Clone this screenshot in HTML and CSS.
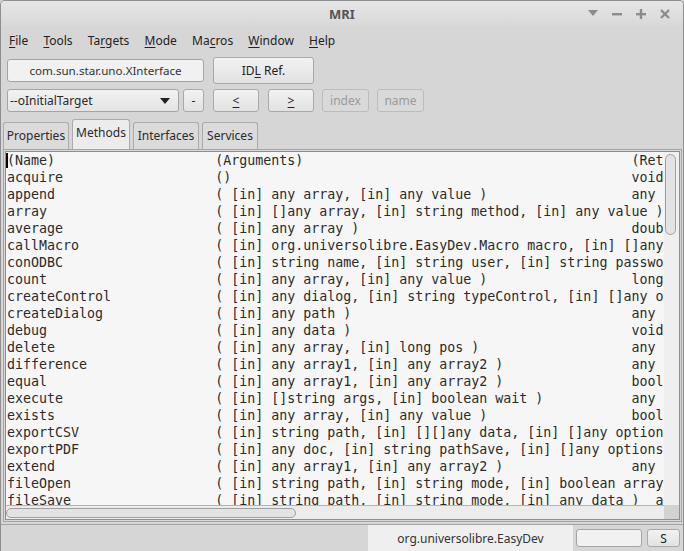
FILE: index.html
```html
<!DOCTYPE html>
<html>
<head>
<meta charset="utf-8">
<link rel="stylesheet" href="styles.css">
</head>
<body>
<div class="window">
  <div class="titlebar">
    <div></div>
    <div class="title">MRI</div>
    <div class="controls">
      <svg width="10" height="7" viewBox="0 0 10 7"><path d="M0 0H10L5 6Z" fill="#8c8c8c"/></svg>
      <svg width="10" height="10" viewBox="0 0 10 10"><rect x="0" y="4" width="10" height="2.4" fill="#8c8c8c"/></svg>
      <svg width="10" height="10" viewBox="0 0 10 10"><rect x="0" y="4" width="10" height="2.4" fill="#8c8c8c"/><rect x="3.8" y="0" width="2.4" height="10" fill="#8c8c8c"/></svg>
      <svg width="10" height="10" viewBox="0 0 10 10"><path d="M1 1L9 9M9 1L1 9" stroke="#8c8c8c" stroke-width="2.4"/></svg>
    </div>
  </div>
  <div class="menubar">
    <span class="menu"><u>F</u>ile</span>
    <span class="menu"><u>T</u>ools</span>
    <span class="menu">Ta<u>r</u>gets</span>
    <span class="menu"><u>M</u>ode</span>
    <span class="menu">Ma<u>c</u>ros</span>
    <span class="menu"><u>W</u>indow</span>
    <span class="menu"><u>H</u>elp</span>
  </div>
  <div class="row1">
    <div class="field ifield">com.sun.star.uno.XInterface</div>
    <div class="btn idl"><span>ID<u>L</u> Ref.</span></div>
  </div>
  <div class="row2">
    <div class="combo"><span>--oInitialTarget</span><svg width="10" height="6" viewBox="0 0 10 6"><path d="M0 0H10L5 6Z" fill="#222"/></svg></div>
    <div class="btn small minus">-</div>
    <div class="btn small nav"><u>&lt;</u></div>
    <div class="btn small nav"><u>&gt;</u></div>
    <div class="btn small dis">index</div>
    <div class="btn small dis">name</div>
  </div>
  <div class="tabs">
    <div class="tab w1">Properties</div>
    <div class="tab sel">Methods</div>
    <div class="tab w1">Interfaces</div>
    <div class="tab w2">Services</div>
  </div>
  <div class="panel">
    <div class="inner">
      <div class="text">
        <span class="caret"></span>
        <div class="r"><span class="n">(Name)</span><span class="a">(Arguments)</span><span class="t">(Return Type)</span></div>
        <div class="r"><span class="n">acquire</span><span class="a">()</span><span class="t">void</span></div>
        <div class="r"><span class="n">append</span><span class="a">( [in] any array, [in] any value )</span><span class="t">any</span></div>
        <div class="r"><span class="n">array</span><span class="a">( [in] []any array, [in] string method, [in] any value )</span><span class="t">any</span></div>
        <div class="r"><span class="n">average</span><span class="a">( [in] any array )</span><span class="t">double</span></div>
        <div class="r"><span class="n">callMacro</span><span class="a">( [in] org.universolibre.EasyDev.Macro macro, [in] []any args )</span><span class="t">any</span></div>
        <div class="r"><span class="n">conODBC</span><span class="a">( [in] string name, [in] string user, [in] string password )</span><span class="t">any</span></div>
        <div class="r"><span class="n">count</span><span class="a">( [in] any array, [in] any value )</span><span class="t">long</span></div>
        <div class="r"><span class="n">createControl</span><span class="a">( [in] any dialog, [in] string typeControl, [in] []any options )</span><span class="t">any</span></div>
        <div class="r"><span class="n">createDialog</span><span class="a">( [in] any path )</span><span class="t">any</span></div>
        <div class="r"><span class="n">debug</span><span class="a">( [in] any data )</span><span class="t">void</span></div>
        <div class="r"><span class="n">delete</span><span class="a">( [in] any array, [in] long pos )</span><span class="t">any</span></div>
        <div class="r"><span class="n">difference</span><span class="a">( [in] any array1, [in] any array2 )</span><span class="t">any</span></div>
        <div class="r"><span class="n">equal</span><span class="a">( [in] any array1, [in] any array2 )</span><span class="t">boolean</span></div>
        <div class="r"><span class="n">execute</span><span class="a">( [in] []string args, [in] boolean wait )</span><span class="t">any</span></div>
        <div class="r"><span class="n">exists</span><span class="a">( [in] any array, [in] any value )</span><span class="t">boolean</span></div>
        <div class="r"><span class="n">exportCSV</span><span class="a">( [in] string path, [in] [][]any data, [in] []any options )</span><span class="t">boolean</span></div>
        <div class="r"><span class="n">exportPDF</span><span class="a">( [in] any doc, [in] string pathSave, [in] []any options )</span><span class="t">any</span></div>
        <div class="r"><span class="n">extend</span><span class="a">( [in] any array1, [in] any array2 )</span><span class="t">any</span></div>
        <div class="r"><span class="n">fileOpen</span><span class="a">( [in] string path, [in] string mode, [in] boolean array )</span><span class="t">any</span></div>
        <div class="r"><span class="n">fileSave</span><span class="a">( [in] string path, [in] string mode, [in] any data )</span><span class="t">any</span></div>
        <div class="r"><span class="n">fileUpdate</span><span class="a">( [in] string path )</span><span class="t">any</span></div>
      </div>
      <div class="vscroll"><div class="vthumb"></div></div>
      <div class="hscroll"><div class="hthumb"></div></div>
      <div class="corner"></div>
    </div>
  </div>
  <div class="status">
    <div class="slabel">org.universolibre.EasyDev</div>
    <div class="field sfield"></div>
    <div class="btn sbtn">S</div>
  </div>
</div>
</body>
</html>
```

FILE: styles.css
```css
html, body {
  margin: 0;
  padding: 0;
  background: #d6d6d6;
}
.window {
  width: 684px;
  height: 551px;
  box-sizing: border-box;
  border: 1px solid #8e8e8e;
  border-bottom: none;
  border-radius: 5px 5px 0 0;
  background: #d6d6d6;
  display: flex;
  flex-direction: column;
  overflow: hidden;
  font-family: "Noto Sans", "Open Sans", sans-serif;
  font-size: 12px;
  color: #2a2a2a;
}
.titlebar {
  height: 25px;
  flex-shrink: 0;
  display: grid;
  grid-template-columns: 1fr auto 1fr;
  align-items: center;
  background: linear-gradient(#e6e6e6, #d8d8d8);
}
.title {
  font-weight: bold;
  font-size: 13px;
  color: #555;
}
.controls {
  display: flex;
  justify-content: flex-end;
  align-items: center;
  gap: 14px;
  padding-right: 13px;
}
.controls svg { display: block; }
.menubar {
  height: 28px;
  flex-shrink: 0;
  display: flex;
  align-items: center;
  padding-left: 0;
  font-size: 12px;
  color: #222;
}
.menu {
  padding: 0 7.6px;
}
.menu:first-child { padding-left: 8px; }
.menu u { text-decoration-thickness: 1px; text-underline-offset: 2px; }
.row1 {
  display: flex;
  align-items: center;
  height: 27px;
  margin-top: 3px;
  padding-left: 6px;
  gap: 9px;
  flex-shrink: 0;
}
.field {
  box-sizing: border-box;
  border: 1px solid #a4a4a4;
  border-radius: 3px;
  background: #f1f1f1;
  display: flex;
  align-items: center;
  justify-content: center;
}
.ifield {
  width: 197px;
  height: 23px;
  color: #333;
  font-size: 11.6px;
}
.btn {
  box-sizing: border-box;
  border: 1px solid #a9a9a9;
  border-radius: 3px;
  background: linear-gradient(#f2f2f2, #e2e2e2);
  display: flex;
  align-items: center;
  justify-content: center;
  color: #222;
}
.btn u { text-decoration-thickness: 1px; text-underline-offset: 2px; }
.idl {
  width: 101px;
  height: 27px;
}
.row2 {
  display: flex;
  align-items: center;
  height: 23px;
  margin-top: 5px;
  padding-left: 6px;
  flex-shrink: 0;
}
.combo {
  box-sizing: border-box;
  width: 172px;
  height: 23px;
  border: 1px solid #a4a4a4;
  border-radius: 3px;
  background: linear-gradient(#f2f2f2, #e4e4e4);
  display: flex;
  align-items: center;
  justify-content: space-between;
  padding: 0 8px 0 2px;
}
.combo svg { display: block; }
.small { height: 23px; }
.minus { width: 21px; margin-left: 4px; }
.nav { width: 46px; margin-left: 9px; }
.nav + .nav { margin-left: 9px; }
.dis {
  width: 47px;
  margin-left: 8px;
  background: #d9d9d9;
  border-color: #bcbcbc;
  color: #9a9a9a;
}
.tabs {
  display: flex;
  align-items: flex-end;
  gap: 3px;
  height: 30px;
  margin-top: 7px;
  padding-left: 2px;
  flex-shrink: 0;
}
.tab {
  box-sizing: border-box;
  height: 27px;
  border: 1px solid #ababab;
  border-bottom: none;
  border-radius: 3px 3px 0 0;
  background: #dbdbdb;
  display: flex;
  align-items: center;
  justify-content: center;
  color: #2a2a2a;
  padding-bottom: 2px;
}
.w1 { width: 66px; }
.w2 { width: 56px; }
.tab.sel {
  width: 58px;
  height: 30px;
  background: #ececec;
  padding-bottom: 4px;
}
.panel {
  box-sizing: border-box;
  height: 373px;
  margin: 0 1px 0 2px;
  border: 1px solid #a6a6a6;
  padding: 1px;
  flex-shrink: 0;
}
.inner {
  box-sizing: border-box;
  height: 100%;
  border: 1px solid #8f8f8f;
  background: #f6f6f6;
  display: grid;
  grid-template-columns: 1fr 15px;
  grid-template-rows: 1fr 14px;
}
.text {
  position: relative;
  overflow: hidden;
  padding-left: 1px;
  font-family: "DejaVu Sans Mono", "Liberation Mono", monospace;
  font-size: 13.3px;
  line-height: 17px;
  color: #2b2b2b;
}
.caret {
  position: absolute;
  left: 0;
  top: 1px;
  width: 2px;
  height: 15px;
  background: #000;
}
.r {
  display: flex;
  white-space: pre;
  width: max-content;
}
.n { width: 26ch; flex-shrink: 0; }
.a { min-width: 50ch; flex-shrink: 0; }
.t { margin-left: 2ch; }
.vscroll {
  background: #efefef;
  padding: 2px 2px 0 1px;
}
.vthumb {
  box-sizing: border-box;
  height: 81px;
  width: 11px;
  border: 1px solid #a0a0a0;
  border-radius: 6px;
  background: #e3e3e3;
}
.hscroll {
  border-top: 1px solid #b4b4b4;
  background: #ececec;
  padding: 2px 0 0 0;
}
.hthumb {
  box-sizing: border-box;
  width: 290px;
  height: 10px;
  border: 1px solid #a0a0a0;
  border-radius: 6px;
  background: #e3e3e3;
}
.corner {
  background: #d2d2d2;
}
.status {
  flex: 1;
  margin-top: 2px;
  border-top: 1px solid #a3a3a3;
  display: flex;
  justify-content: flex-end;
  align-items: center;
  padding-right: 3px;
}
.slabel {
  align-self: stretch;
  width: 205px;
  background: #efefef;
  display: flex;
  align-items: center;
  justify-content: center;
  color: #333;
  margin-right: 3px;
}
.sfield {
  width: 66px;
  height: 18px;
  margin-right: 5px;
}
.sbtn {
  width: 33px;
  height: 18px;
}
```
